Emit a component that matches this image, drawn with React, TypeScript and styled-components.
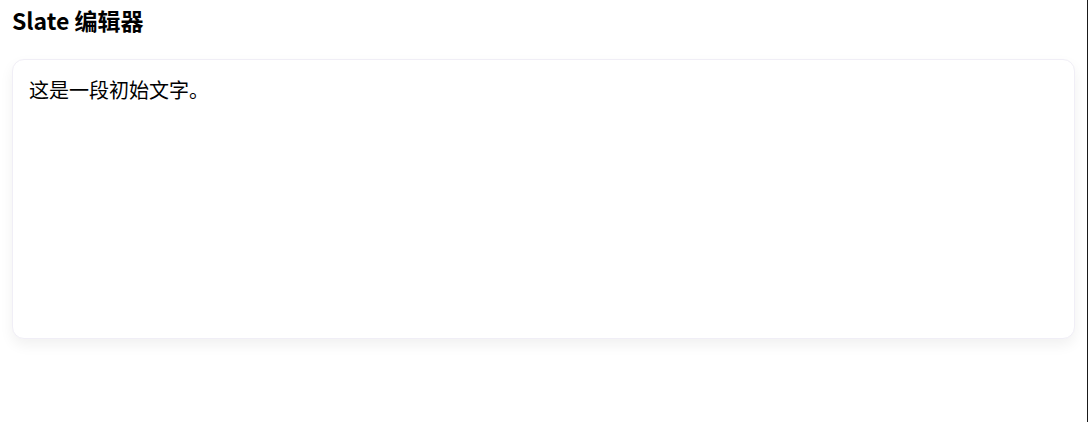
import React from 'react';
import styled, { createGlobalStyle } from 'styled-components';

const GlobalStyle = createGlobalStyle`
  html, body {
    margin: 0;
    padding: 0;
    background: #ffffff;
  }
  body {
    font-family: "Noto Sans CJK SC", "Noto Sans", sans-serif;
    color: #111111;
  }
`;

const Page = styled.div`
  min-height: 100vh;
  box-sizing: border-box;
  padding: 4px 12px 0 12px;
  border-right: 1px solid #1a1a1a;
`;

const Title = styled.h2`
  margin: 0 0 23px 0;
  font-size: 23px;
  line-height: 32px;
  font-weight: 700;
  color: #000000;
`;

const EditorCard = styled.div`
  box-sizing: border-box;
  height: 280px;
  padding: 16px;
  border: 1px solid #f0eef6;
  border-radius: 12px;
  background: #ffffff;
  box-shadow: 0 6px 14px rgba(0, 0, 0, 0.06);
  font-size: 20px;
  line-height: 28px;
  color: #000000;
  outline: none;
`;

const Paragraph = styled.p`
  margin: 0;
`;

export default function App() {
  return (
    <>
      <GlobalStyle />
      <Page>
        <Title>Slate 编辑器</Title>
        <EditorCard contentEditable suppressContentEditableWarning>
          <Paragraph>这是一段初始文字。</Paragraph>
        </EditorCard>
      </Page>
    </>
  );
}
